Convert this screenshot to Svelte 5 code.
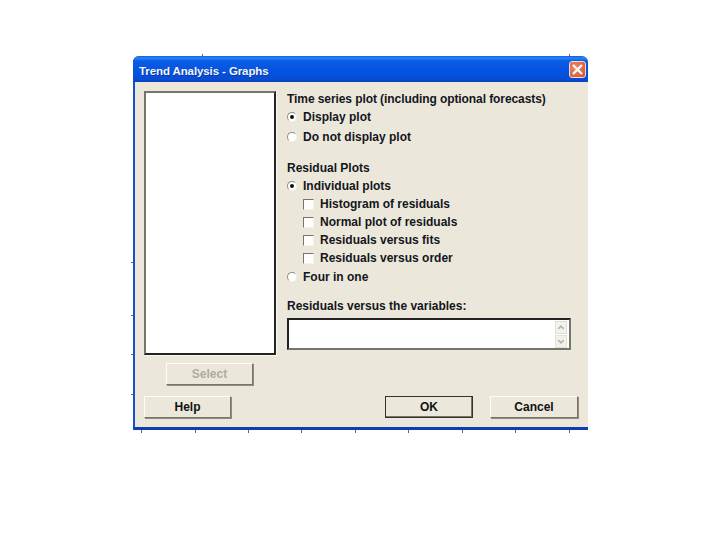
<script>
  const ticksBottom = [141, 195, 248, 301, 355, 408, 462, 515, 569];
  const ticksLeft = [262, 315, 354, 394];
  const ticksTop = [202, 569];

  const residualChecks = [
    'Histogram of residuals',
    'Normal plot of residuals',
    'Residuals versus fits',
    'Residuals versus order'
  ];
</script>

<div class="page">
  <div class="window">
    {#each ticksBottom as x}
      <i class="tick bottom" style:left="{x - 135}px"></i>
    {/each}
    {#each ticksLeft as y}
      <i class="tick left" style:top="{y - 56}px"></i>
    {/each}
    {#each ticksTop as x}
      <i class="tick top" style:left="{x - 135}px"></i>
    {/each}

    <div class="titlebar">
      <span class="title">Trend Analysis - Graphs</span>
      <span class="close">
        <svg width="13" height="13" viewBox="0 0 13 13">
          <path d="M2 2 L11 11 M11 2 L2 11" stroke="#fff" stroke-width="2.2" fill="none" />
        </svg>
      </span>
    </div>

    <div class="body">
      <div class="left-col">
        <div class="listbox"></div>
        <button class="btn select" disabled>Select</button>
        <button class="btn help">Help</button>
      </div>

      <div class="right-col">
        <div class="label first">Time series plot (including optional forecasts)</div>
        <div class="row gap20"><span class="radio on"></span>Display plot</div>
        <div class="row gap20"><span class="radio"></span>Do not display plot</div>

        <div class="label second">Residual Plots</div>
        <div class="row gap18"><span class="radio on"></span>Individual plots</div>
        {#each residualChecks as text}
          <div class="row gap18 indent"><span class="check"></span>{text}</div>
        {/each}
        <div class="row gap18 last"><span class="radio"></span>Four in one</div>

        <div class="label third">Residuals versus the variables:</div>
        <div class="textbox">
          <div class="scroll">
            <span class="arrow">
              <svg width="11" height="9" viewBox="0 0 11 9"><path d="M2.5 6 L5.5 3 L8.5 6" stroke="#b4b4aa" stroke-width="1.6" fill="none" /></svg>
            </span>
            <span class="arrow">
              <svg width="11" height="9" viewBox="0 0 11 9"><path d="M2.5 3 L5.5 6 L8.5 3" stroke="#b4b4aa" stroke-width="1.6" fill="none" /></svg>
            </span>
          </div>
        </div>

        <div class="actions">
          <button class="btn ok">OK</button>
          <button class="btn cancel">Cancel</button>
        </div>
      </div>
    </div>
  </div>
</div>

<style>
  :global(body) {
    margin: 0;
    background: #fff;
  }

  .page {
    width: 720px;
    height: 540px;
    padding: 56px 0 0 133px;
    box-sizing: border-box;
    overflow: hidden;
    font-family: "Liberation Sans", Arial, sans-serif;
  }

  .window {
    position: relative;
    width: 455px;
    height: 374px;
    box-sizing: border-box;
    background: #ebe8db;
    border-left: 2px solid #1450d0;
    border-bottom: 3px solid #0f3fae;
    border-radius: 6px 6px 0 0;
  }

  .tick {
    position: absolute;
    background: #5c6a80;
  }

  .tick.bottom {
    top: 374px;
    width: 1px;
    height: 3px;
  }

  .tick.left {
    left: -4px;
    width: 2px;
    height: 1px;
  }

  .tick.top {
    top: -2px;
    width: 1px;
    height: 2px;
  }

  .titlebar {
    display: flex;
    align-items: center;
    justify-content: space-between;
    height: 26px;
    margin-left: -2px;
    padding: 0 2px 0 6px;
    box-sizing: border-box;
    background: linear-gradient(#0a5fe0 0, #2a86f4 2px, #0a5be6 5px, #0452e0 18px, #0a4ad0 24px, #0d3fb4 26px);
    border-radius: 6px 6px 0 0;
  }

  .title {
    padding-top: 4px;
    color: #f2f5fb;
    font-size: 11.5px;
    font-weight: 700;
    letter-spacing: -0.1px;
    text-shadow: 1px 1px 0 #0a3aa0;
  }

  .close {
    display: flex;
    align-items: center;
    justify-content: center;
    width: 17px;
    height: 17px;
    margin-top: 1px;
    box-sizing: border-box;
    border: 1px solid #f0dcd4;
    border-radius: 3px;
    background: radial-gradient(circle at 35% 35%, #ec8a68, #d8502c);
  }

  .body {
    display: flex;
    height: 345px;
  }

  .left-col {
    display: flex;
    flex-direction: column;
    width: 151px;
    padding: 9px 0 0 9px;
    box-sizing: border-box;
  }

  .listbox {
    width: 132px;
    height: 264px;
    box-sizing: border-box;
    background: #fff;
    border: 2px solid;
    border-color: #77746a #222 #222 #77746a;
    box-shadow: 1px 1px 0 #fbfaf4;
  }

  .btn {
    display: block;
    padding: 0;
    font-family: inherit;
    font-size: 12px;
    font-weight: 700;
    color: #111;
    background: #ebe8db;
    border: 1px solid;
    border-color: #fdfcf6 #77746a #77746a #fdfcf6;
    box-shadow: 1px 1px 0 #8f8c80;
    box-sizing: border-box;
  }

  .select {
    width: 87px;
    height: 22px;
    margin: 8px 0 0 22px;
    color: #aeaca2;
  }

  .help {
    width: 87px;
    height: 22px;
    margin-top: 11px;
  }

  .right-col {
    display: flex;
    flex-direction: column;
    flex: 1;
    padding-left: 1px;
    color: #14161c;
    font-size: 12px;
    font-weight: 700;
  }

  .label {
    line-height: 16px;
    white-space: nowrap;
  }

  .label.first {
    margin-top: 9px;
    letter-spacing: -0.08px;
  }

  .label.second {
    margin-top: 13px;
    margin-bottom: 1px;
  }

  .label.third {
    margin-top: 12px;
  }

  .row {
    display: flex;
    align-items: center;
    gap: 6px;
    white-space: nowrap;
  }

  .gap20 {
    height: 20px;
  }

  .gap18 {
    height: 18px;
  }

  .last {
    margin-top: 1px;
  }

  .indent {
    padding-left: 16px;
    gap: 6px;
  }

  .radio {
    position: relative;
    flex: none;
    width: 10px;
    height: 10px;
    box-sizing: border-box;
    border-radius: 50%;
    background: #fff;
    border: 1px solid;
    border-color: #8f8c80 #f4f2ea #f4f2ea #8f8c80;
  }

  .radio.on::after {
    content: "";
    position: absolute;
    left: 2px;
    top: 2px;
    width: 4px;
    height: 4px;
    border-radius: 50%;
    background: #111;
  }

  .check {
    flex: none;
    width: 11px;
    height: 11px;
    box-sizing: border-box;
    background: #fdfdfa;
    border: 1px solid;
    border-color: #77746a #f4f2ea #f4f2ea #77746a;
  }

  .textbox {
    display: flex;
    justify-content: flex-end;
    width: 284px;
    height: 32px;
    margin-top: 4px;
    box-sizing: border-box;
    background: #fff;
    border: 2px solid;
    border-color: #222 #77746a #77746a #222;
    padding: 0 2px;
  }

  .scroll {
    display: flex;
    flex-direction: column;
    gap: 1px;
    padding-top: 1px;
  }

  .arrow {
    display: flex;
    align-items: center;
    justify-content: center;
    width: 12px;
    height: 13px;
    background: #f2f1ea;
    border: 1px solid #e2e0d6;
    box-sizing: border-box;
  }

  .actions {
    display: flex;
    gap: 17px;
    margin-top: 46px;
    margin-left: 98px;
  }

  .ok {
    width: 88px;
    height: 22px;
    border-color: #333;
    box-shadow: inset -1px -1px 0 #77746a;
  }

  .cancel {
    width: 88px;
    height: 22px;
  }
</style>
